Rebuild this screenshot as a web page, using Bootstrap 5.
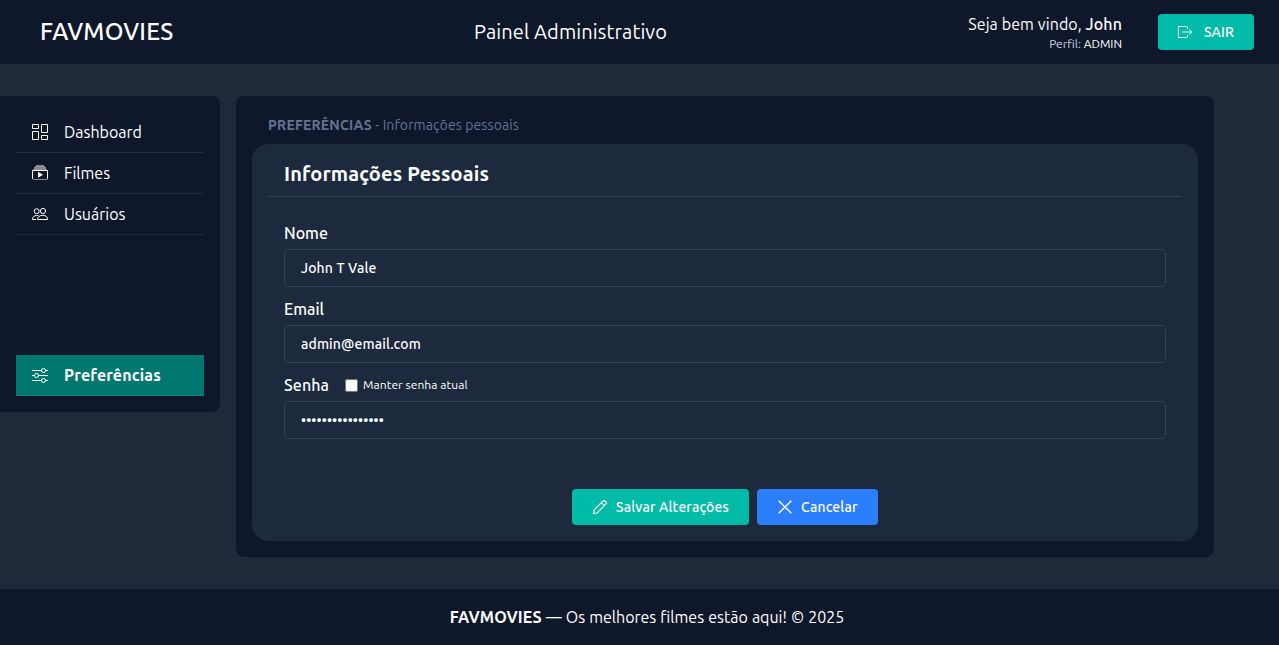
<!DOCTYPE html>
<html lang="pt-BR">
<head>
<meta charset="utf-8">
<meta name="viewport" content="width=device-width, initial-scale=1">
<title>FAVMOVIES - Painel Administrativo</title>
<link href="https://cdn.jsdelivr.net/npm/bootstrap@5.3.0/dist/css/bootstrap.min.css" rel="stylesheet">
<style>
body{font-family:Ubuntu,"Noto Sans",sans-serif;background:#1e2939;color:#fff;font-size:16px;line-height:24px}
.fw-mid{font-weight:500}
.deep{background:#0f172b}
.topbar{height:64px;padding:0 25px 0 40px}
.brand{font-size:24px;letter-spacing:.2px;width:134px}
.title{font-size:20px;letter-spacing:.1px;width:194px}
.greeting{width:160px;margin-right:36px;padding-top:1px}
.hello{letter-spacing:.1px;line-height:20px}
.role{font-size:12px;line-height:16px;margin-top:2px}
.role span{color:#cad5e2}
.act{--bs-btn-color:#fff;--bs-btn-hover-color:#fff;height:36px;border:0;border-radius:4px;font-size:14px;font-weight:500;line-height:20px;white-space:nowrap;padding:0 0 0 20px;gap:8px;letter-spacing:.13px}
.act-teal,.act-teal:hover{background:#00bba7}
.act-blue,.act-blue:hover{background:#2b7fff}
.act-exit{width:96px;padding-left:19px;gap:11px;letter-spacing:0}
.act-save{width:177px}
.act-cancel{width:121px}
.side{width:220px;height:316px;border-radius:0 8px 8px 0;padding:16px}
.side a{height:41px;padding:0 16px;gap:16px;color:#fff;text-decoration:none;border-bottom:1px solid #232c3e}
.side a.on{background:#00786f;border-color:#15857c;font-weight:700;margin-top:auto;letter-spacing:.15px}
.panel{width:978px;height:461px;border-radius:8px;padding:16px}
.crumb{font-size:14px;line-height:20px;color:#62748e;padding:3px 16px 9px;height:32px;letter-spacing:.1px}
.crumb b{letter-spacing:.18px}
.sheet{background:#1d293d;border-radius:16px;height:397px;padding:0 16px 16px}
.sheet h1{font-size:20px;line-height:28px;font-weight:700;padding:16px 16px 8px;margin:0;height:53px;border-bottom:1px solid #314158;letter-spacing:.15px}
.fields{padding:24px 16px 0}
.fields label{line-height:24px}
.fields .form-control,.fields .form-control:focus{height:38px;background:transparent;border:1px solid #314158;border-radius:4px;padding:0 16px;color:#fff;font-size:14px;font-weight:500;margin:4px 0 10px;box-shadow:none;letter-spacing:.13px}
.pass-label{width:45px;letter-spacing:.1px}
.keep{font-size:12px;letter-spacing:.06px}
.keep input{width:13px;height:13px;margin:0 5px 0 0}
.form-actions{margin-top:50px}
.foot{height:56px;padding-left:15px;word-spacing:.4px}
.foot b{letter-spacing:.12px}
</style>
</head>
<body>
<header class="topbar deep d-flex align-items-center justify-content-between text-nowrap">
  <div class="brand fw-mid">FAVMOVIES</div>
  <div class="title">Painel Administrativo</div>
  <div class="d-flex align-items-center">
    <div class="greeting text-end" style="width:auto">
      <div class="hello">Seja bem vindo, <span class="fw-mid">John</span></div>
      <div class="role"><span>Perfil:</span> ADMIN</div>
    </div>
    <button class="btn act act-teal act-exit d-flex align-items-center">
      <svg width="16" height="16" viewBox="0 0 16 16" fill="none" stroke="currentColor" stroke-width=".9"><path d="M10.500 5V3.500a1 1 0 0 0-1-1h-8v11h8a1 1 0 0 0 1-1V11M5 8h9.500M12 5.200 14.800 8 12 10.800"/></svg>
      <span>SAIR</span>
    </button>
  </div>
</header>
<main class="d-flex gap-3" style="padding:32px 0">
  <nav class="side deep d-flex flex-column flex-shrink-0">
    <a class="d-flex align-items-center" href="#"><svg width="16" height="16" viewBox="0 0 16 16" fill="none" stroke="currentColor"><path d="M.5.5h6v4h-6zM9.500.5h6v8h-6zM.5 7.500h6v8h-6zM9.500 11.500h6v4h-6z"/></svg><span>Dashboard</span></a>
    <a class="d-flex align-items-center" href="#"><svg width="16" height="16" viewBox="0 0 16 16"><path fill="#fff" fill-opacity=".5" d="M4 0h8v1h1v1h1v2h1v1H1V4h1V2h1V1h1zM1 14h14v1H1z"/><path fill="none" stroke="#fff" d="M.5 14V5.500h15V14"/><path fill="#fff" d="M6 6.800v5.900l5-2.900z"/></svg><span>Filmes</span></a>
    <a class="d-flex align-items-center" href="#"><svg width="16" height="16" viewBox="0 0 16 16" fill="none" stroke="currentColor"><circle cx="4.700" cy="5.200" r="2.500"/><circle cx="11" cy="5" r="2.600"/><path d="M5.500 13.500h10c0-2.700-1.600-4.200-4.700-4.200s-5.300 1.700-5.300 4.200zM4 13.500H.5C.5 11 2 9.500 4.700 9.500c.8 0 1.500.1 2 .4"/></svg><span>Usuários</span></a>
    <a class="on d-flex align-items-center" href="#"><svg width="16" height="16" viewBox="0 0 16 16" fill="none" stroke="currentColor"><path d="M0 3.500h9.500M13.500 3.500H16M0 8.500h2.500M6.500 8.500H16M0 13.500h9.500M13.500 13.500H16"/><circle cx="11.500" cy="3.500" r="2"/><circle cx="4.500" cy="8.500" r="2"/><circle cx="11.500" cy="13.500" r="2"/></svg><span>Preferências</span></a>
  </nav>
  <section class="panel deep flex-shrink-0">
    <div class="crumb"><b>PREFERÊNCIAS</b> - <span>Informações pessoais</span></div>
    <div class="sheet">
      <h1>Informações Pessoais</h1>
      <form class="fields">
        <label class="d-block fw-mid" for="nome">Nome</label>
        <input class="form-control" id="nome" value="John T Vale">
        <label class="d-block fw-mid" for="email">Email</label>
        <input class="form-control" id="email" value="admin@email.com">
        <div class="d-flex align-items-center gap-3"><label class="pass-label fw-mid" for="senha">Senha</label><label class="keep d-flex align-items-center"><input type="checkbox">Manter senha atual</label></div>
        <input class="form-control" id="senha" type="password" value="1234567890123456">
        <div class="form-actions d-flex justify-content-center gap-2">
          <button type="button" class="btn act act-teal act-save d-flex align-items-center">
            <svg width="16" height="16" viewBox="0 0 16 16" fill="none" stroke="currentColor" stroke-width="1.200"><path d="M10.800 2.200a1.800 1.800 0 0 1 2.500 0l.5.5a1.800 1.800 0 0 1 0 2.500L5 14l-3.500.6L2 11zM9.300 3.700l3 3"/></svg>
            <span>Salvar Alterações</span></button>
          <button type="button" class="btn act act-blue act-cancel d-flex align-items-center">
            <svg width="16" height="16" viewBox="0 0 16 16" fill="none" stroke="currentColor" stroke-width="1.400"><path d="m1.700 1.700 12.600 12.600M14.300 1.700 1.700 14.300"/></svg>
            <span>Cancelar</span></button>
        </div>
      </form>
    </div>
  </section>
</main>
<footer class="foot deep d-flex align-items-center justify-content-center"><div><b>FAVMOVIES</b> — <span>Os melhores filmes estão aqui! © 2025</span></div></footer>
<script src="https://cdn.jsdelivr.net/npm/bootstrap@5.3.0/dist/js/bootstrap.bundle.min.js"></script>
</body>
</html>
